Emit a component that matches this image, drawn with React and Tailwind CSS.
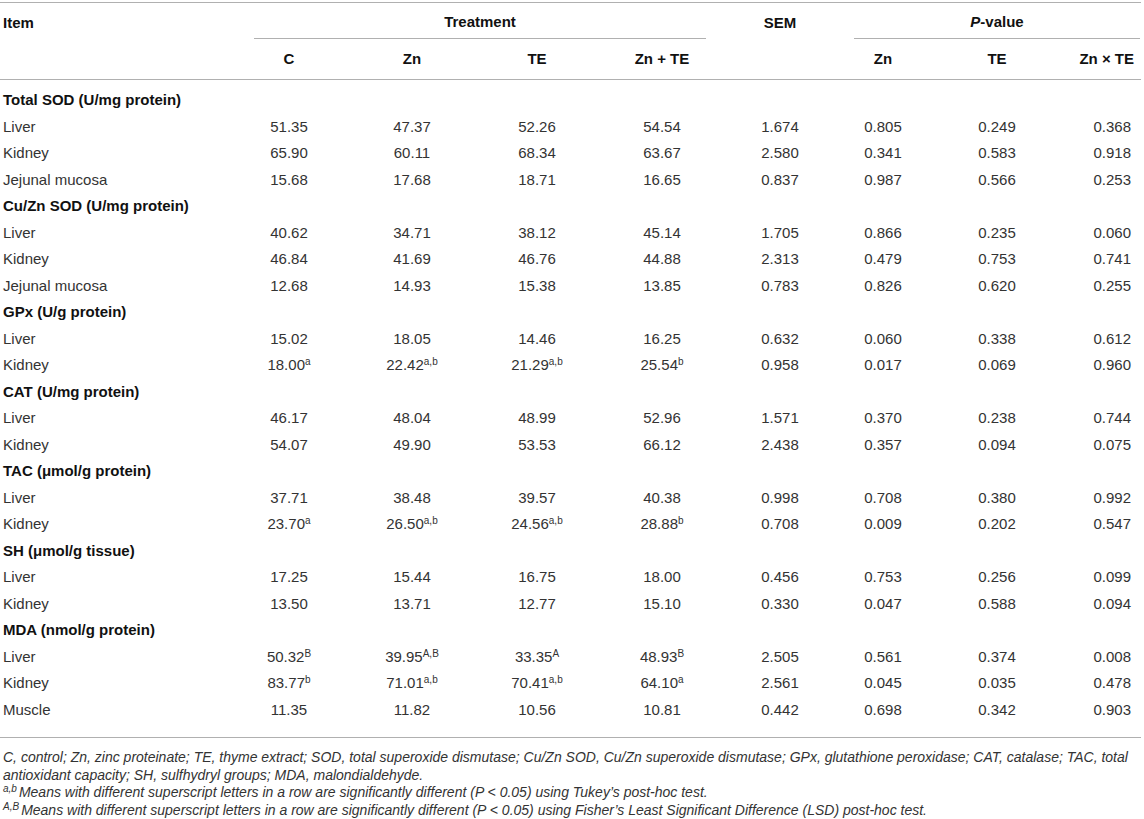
import React from 'react';

const sections = [
  {
    title: 'Total SOD (U/mg protein)',
    rows: [
      ['Liver', '51.35', '47.37', '52.26', '54.54', '1.674', '0.805', '0.249', '0.368'],
      ['Kidney', '65.90', '60.11', '68.34', '63.67', '2.580', '0.341', '0.583', '0.918'],
      ['Jejunal mucosa', '15.68', '17.68', '18.71', '16.65', '0.837', '0.987', '0.566', '0.253'],
    ],
  },
  {
    title: 'Cu/Zn SOD (U/mg protein)',
    rows: [
      ['Liver', '40.62', '34.71', '38.12', '45.14', '1.705', '0.866', '0.235', '0.060'],
      ['Kidney', '46.84', '41.69', '46.76', '44.88', '2.313', '0.479', '0.753', '0.741'],
      ['Jejunal mucosa', '12.68', '14.93', '15.38', '13.85', '0.783', '0.826', '0.620', '0.255'],
    ],
  },
  {
    title: 'GPx (U/g protein)',
    rows: [
      ['Liver', '15.02', '18.05', '14.46', '16.25', '0.632', '0.060', '0.338', '0.612'],
      ['Kidney', ['18.00', 'a'], ['22.42', 'a,b'], ['21.29', 'a,b'], ['25.54', 'b'], '0.958', '0.017', '0.069', '0.960'],
    ],
  },
  {
    title: 'CAT (U/mg protein)',
    rows: [
      ['Liver', '46.17', '48.04', '48.99', '52.96', '1.571', '0.370', '0.238', '0.744'],
      ['Kidney', '54.07', '49.90', '53.53', '66.12', '2.438', '0.357', '0.094', '0.075'],
    ],
  },
  {
    title: 'TAC (\u03bcmol/g protein)',
    rows: [
      ['Liver', '37.71', '38.48', '39.57', '40.38', '0.998', '0.708', '0.380', '0.992'],
      ['Kidney', ['23.70', 'a'], ['26.50', 'a,b'], ['24.56', 'a,b'], ['28.88', 'b'], '0.708', '0.009', '0.202', '0.547'],
    ],
  },
  {
    title: 'SH (\u03bcmol/g tissue)',
    rows: [
      ['Liver', '17.25', '15.44', '16.75', '18.00', '0.456', '0.753', '0.256', '0.099'],
      ['Kidney', '13.50', '13.71', '12.77', '15.10', '0.330', '0.047', '0.588', '0.094'],
    ],
  },
  {
    title: 'MDA (nmol/g protein)',
    rows: [
      ['Liver', ['50.32', 'B'], ['39.95', 'A,B'], ['33.35', 'A'], ['48.93', 'B'], '2.505', '0.561', '0.374', '0.008'],
      ['Kidney', ['83.77', 'b'], ['71.01', 'a,b'], ['70.41', 'a,b'], ['64.10', 'a'], '2.561', '0.045', '0.035', '0.478'],
      ['Muscle', '11.35', '11.82', '10.56', '10.81', '0.442', '0.698', '0.342', '0.903'],
    ],
  },
];

const grid = 'grid grid-cols-[228px_122px_124px_126px_124px_112px_94px_134px_80px]';

const Cell = ({ value, last }) => {
  const align = last ? 'text-right pr-[13px]' : 'text-center';
  if (Array.isArray(value)) {
    return (
      <div className={align}>
        {value[0]}
        <sup className="text-[10px]">{value[1]}</sup>
      </div>
    );
  }
  return <div className={align}>{value}</div>;
};

export default function App() {
  return (
    <div className="w-[1144px] bg-white font-['Liberation_Sans',Arial,sans-serif] text-[15px] text-[#333]">
      <div className="pt-[2px]">
        <div className="mr-[3px] border-t border-[#b0b0b0]">
          {/* header row 1 */}
          <div className="flex h-[36px] items-center pt-[4px] font-bold text-[#111]">
            <div className="w-[254px] pl-[3px]">Item</div>
            <div className="flex h-full w-[452px] items-center justify-center border-b border-[#b0b0b0]">
              Treatment
            </div>
            <div className="w-[148px] text-center">SEM</div>
            <div className="flex h-full w-[286px] items-center justify-center border-b border-[#b0b0b0]">
              <span className="italic">P</span>-value
            </div>
          </div>
          {/* header row 2 */}
          <div className={`${grid} h-[41px] items-center border-b border-[#b0b0b0] font-bold text-[#111]`}>
            <div></div>
            <div className="text-center">C</div>
            <div className="text-center">Zn</div>
            <div className="text-center">TE</div>
            <div className="text-center">Zn + TE</div>
            <div></div>
            <div className="text-center">Zn</div>
            <div className="text-center">TE</div>
            <div className="pr-[10px] text-right">Zn × TE</div>
          </div>
        </div>
      </div>

      <div className="mr-[3px] border-b border-[#b0b0b0] pt-[7px] pb-[14px]">
        {sections.map((s) => (
          <div key={s.title}>
            <div className="flex h-[26.5px] items-center pl-[3px] font-bold text-[#111]">{s.title}</div>
            {s.rows.map((r, i) => (
              <div key={i} className={`${grid} h-[26.5px] items-center`}>
                <div className="pl-[3px]">{r[0]}</div>
                {r.slice(1).map((v, j) => (
                  <Cell key={j} value={v} last={j === 7} />
                ))}
              </div>
            ))}
          </div>
        ))}
      </div>

      <div className="mt-[11px] pl-[3px] text-[14px] leading-[17.5px] italic text-[#333]">
        <p className="whitespace-nowrap">
          C, control; Zn, zinc proteinate; TE, thyme extract; SOD, total superoxide dismutase; Cu/Zn SOD, Cu/Zn
          superoxide dismutase; GPx, glutathione peroxidase; CAT, catalase; TAC, total
          <br />
          antioxidant capacity; SH, sulfhydryl groups; MDA, malondialdehyde.
        </p>
        <p className="whitespace-nowrap">
          <sup className="mr-[2px] text-[10px]">a,b</sup>Means with different superscript letters in a row are
          significantly different (P &lt; 0.05) using Tukey’s post-hoc test.
        </p>
        <p className="whitespace-nowrap">
          <sup className="mr-[2px] text-[10px]">A,B</sup>Means with different superscript letters in a row are
          significantly different (P &lt; 0.05) using Fisher’s Least Significant Difference (LSD) post-hoc test.
        </p>
      </div>
    </div>
  );
}
